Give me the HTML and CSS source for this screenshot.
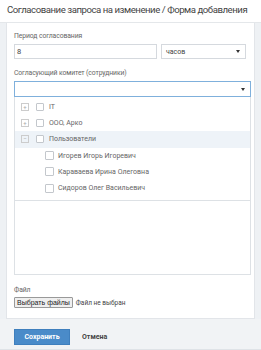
FILE: index.html
```html
<!DOCTYPE html>
<html lang="ru">
<head>
    <meta charset="UTF-8">
    <meta name="viewport" content="width=device-width, initial-scale=1.0">
    <title>Согласование запроса на изменение</title>
    <link rel="stylesheet" href="styles.css">
</head>
<body>
    <div class="page-title">Согласование запроса на изменение / Форма добавления</div>

    <div class="form-wrap">
        <div class="panel">
            <div class="field">
                <label class="field-label">Период согласования</label>
                <div class="period-row">
                    <input class="text-input" type="text" value="8">
                    <div class="select-box">
                        <span>часов</span>
                        <span class="caret"></span>
                    </div>
                </div>
            </div>

            <div class="field">
                <label class="field-label">Согласующий комитет (сотрудники)</label>
                <div class="combo">
                    <div class="select-box focused">
                        <span></span>
                        <span class="caret"></span>
                    </div>

                    <ul class="tree">
                        <li class="tree-row">
                            <span class="toggle">+</span>
                            <span class="check"></span>
                            <span>IT</span>
                        </li>
                        <li class="tree-row">
                            <span class="toggle">+</span>
                            <span class="check"></span>
                            <span>ООО, Арко</span>
                        </li>
                        <li class="tree-row active">
                            <span class="toggle">−</span>
                            <span class="check"></span>
                            <span>Пользователи</span>
                        </li>
                        <li class="tree-row child">
                            <span class="check"></span>
                            <span>Игорев Игорь Игоревич</span>
                        </li>
                        <li class="tree-row child">
                            <span class="check"></span>
                            <span>Караваева Ирина Олеговна</span>
                        </li>
                        <li class="tree-row child">
                            <span class="check"></span>
                            <span>Сидоров Олег Васильевич</span>
                        </li>
                    </ul>

                    <div class="text-area"></div>
                </div>
            </div>

            <div class="field file-field">
                <label class="field-label">Файл</label>
                <div class="file-row">
                    <button class="file-button" type="button">Выбрать файлы</button>
                    <span class="file-status">Файл не выбран</span>
                </div>
            </div>
        </div>

        <div class="form-footer">
            <button class="save-button" type="button">Сохранить</button>
            <button class="cancel-button" type="button">Отмена</button>
        </div>
    </div>
</body>
</html>
```

FILE: styles.css
```css
:root {
    --border-color: #d5d9de;
    --frame-color: #eef1f4;
    --text-color: #555;
    --primary-color: #4a8bc9;
    --focus-color: #7fb0dc;
    --hover-color: #eef3f8;
}

body {
    font-family: Roboto, "Liberation Sans", sans-serif;
    margin: 0;
    padding: 0;
    color: var(--text-color);
    background: var(--frame-color);
}

.page-title {
    height: 22px;
    line-height: 20px;
    padding-left: 7px;
    font-size: 9.6px;
    letter-spacing: -0.45px;
    color: #444;
    background: white;
    border-bottom: 1px solid #e4e7ea;
    white-space: nowrap;
}

.form-wrap {
    padding: 0 6px 0 6px;
    border-bottom: 2px solid #dfe3e7;
}

.panel {
    background: white;
    border: 1px solid #e2e5e9;
    border-top: none;
    padding: 9px 3px 10px 7px;
}

.field {
    margin-bottom: 10px;
}

.field-label {
    display: block;
    font-size: 6.8px;
    letter-spacing: -0.1px;
    line-height: 9px;
    margin-bottom: 3px;
    color: #666;
}

.period-row {
    display: flex;
    gap: 4px;
    padding-right: 5px;
}

.text-input {
    flex: 1;
    min-width: 0;
    height: 15px;
    box-sizing: border-box;
    border: 1px solid var(--border-color);
    padding: 0 2px;
    font-family: inherit;
    font-size: 7.5px;
    color: #444;
    outline: none;
}

.select-box {
    display: flex;
    align-items: center;
    justify-content: space-between;
    width: 85px;
    height: 15px;
    box-sizing: border-box;
    border: 1px solid var(--border-color);
    padding: 0 5px 0 4px;
    font-size: 7px;
    color: #444;
    background: white;
}

.select-box.focused {
    width: auto;
    height: 16px;
    border-color: var(--focus-color);
}

.caret {
    width: 0;
    height: 0;
    border-left: 2.5px solid transparent;
    border-right: 2.5px solid transparent;
    border-top: 3px solid #333;
}

.combo {
    position: relative;
}

.tree {
    position: absolute;
    top: 16px;
    left: 0;
    right: 0;
    z-index: 2;
    margin: 0;
    padding: 2px 0 4px 0;
    list-style: none;
    background: white;
    border: 1px solid #dde1e5;
    border-top: none;
}

.tree-row {
    display: flex;
    align-items: center;
    gap: 5px;
    height: 16.2px;
    padding-left: 6px;
    font-size: 7px;
    color: #666;
}

.tree-row.active {
    background: var(--hover-color);
}

.tree-row.child {
    padding-left: 30px;
    gap: 4px;
}

.toggle {
    display: flex;
    align-items: center;
    justify-content: center;
    width: 6px;
    height: 6px;
    border: 1px solid #ccc;
    font-size: 6px;
    line-height: 1;
    color: #aaa;
    margin-right: 2px;
}

.check {
    width: 6px;
    height: 6px;
    border: 1px solid #c3c7cc;
    border-radius: 1px;
    background: white;
}

.tree-row.child .check {
    width: 7px;
    height: 7px;
}

.text-area {
    height: 178px;
    border: 1px solid #dde1e5;
    border-top: none;
    box-sizing: border-box;
}

.file-field {
    margin-top: 11px;
    margin-bottom: 0;
}

.file-field .field-label {
    margin-bottom: 2px;
}

.file-row {
    display: flex;
    align-items: center;
    gap: 3px;
}

.file-button {
    height: 11px;
    padding: 0 2px;
    font-family: "Liberation Sans", Arial, sans-serif;
    font-size: 7px;
    line-height: 9px;
    color: #222;
    background: #efefef;
    border: 1px solid #999;
    border-radius: 1px;
}

.file-status {
    font-size: 6.5px;
    color: #444;
}

.form-footer {
    display: flex;
    align-items: center;
    gap: 12px;
    padding: 10px 14px 4px 14px;
    margin: 0 -6px;
    background: #f1f3f5;
}

.save-button {
    width: 56px;
    height: 16px;
    background-color: var(--primary-color);
    color: white;
    border: 1px solid #3f7fbd;
    font-family: inherit;
    font-size: 7px;
    font-weight: bold;
    cursor: pointer;
}

.cancel-button {
    background: none;
    border: none;
    padding: 0;
    font-family: inherit;
    font-size: 7px;
    font-weight: bold;
    color: #444;
    cursor: pointer;
}
```
